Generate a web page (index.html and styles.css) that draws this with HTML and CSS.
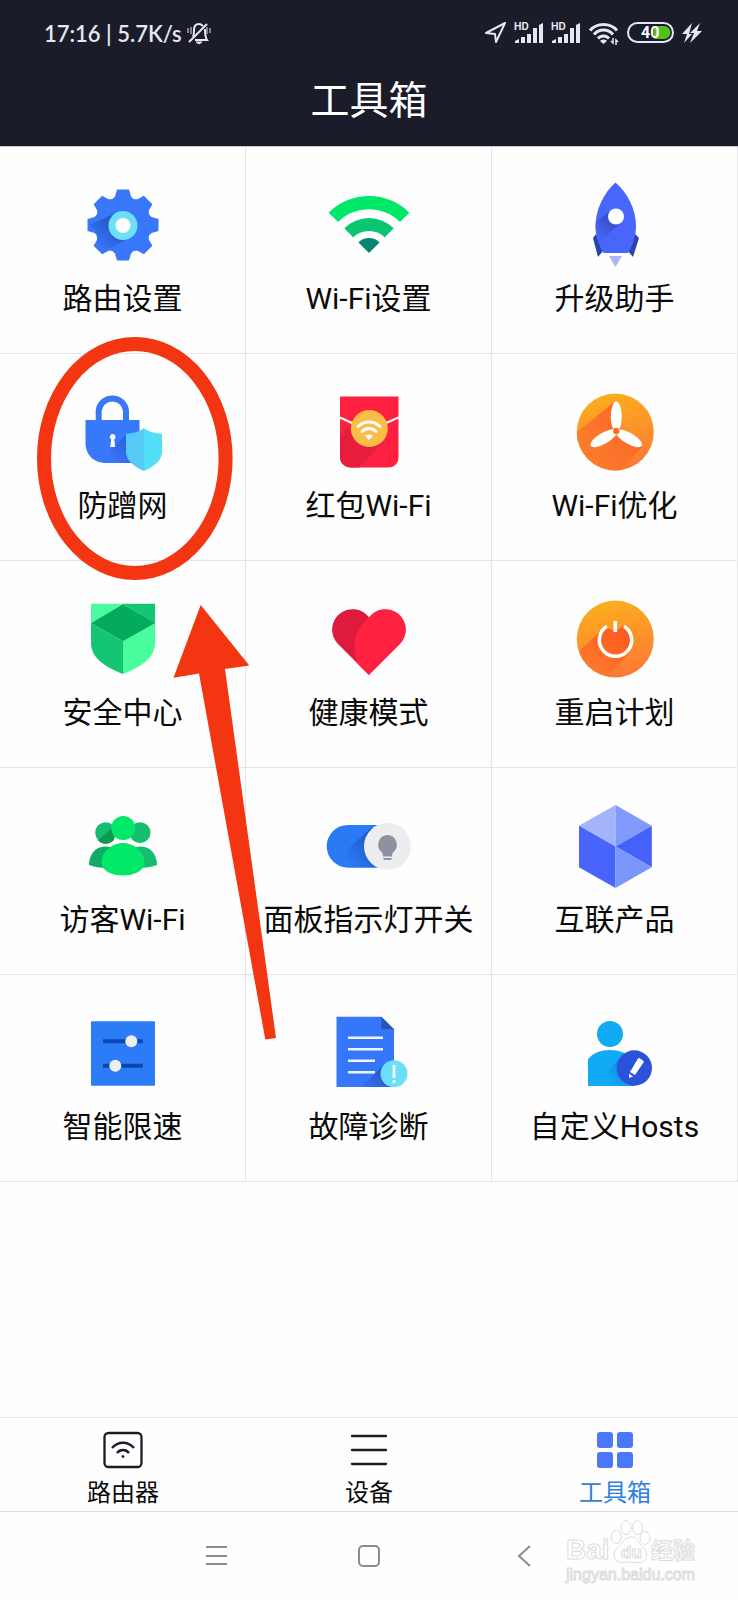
FILE: index.html
```html
<!DOCTYPE html>
<html lang="zh-CN">
<head>
    <meta charset="utf-8">
    <meta name="viewport" content="width=device-width, initial-scale=1">
    <title>工具箱</title>
    <link rel="stylesheet" href="styles.css">
</head>
<body>
    <header class="header">
        <div class="status">
            <div class="status-left">
                <span>17:16 | 5.7K/s</span>
                <svg width="24" height="24" viewBox="0 0 24 24" fill="none" stroke="#e6e7f0" stroke-width="2">
                    <path d="M6 16c1-2 1-4 1-7 0-4 2-6 5-6 2 0 3 1 4 2M18 8c0 4 0 8 2 11H8M2 21L20 3"/>
                    <path d="M9 21h6l-3 2z" fill="#e6e7f0" stroke-width="1"/>
                    <path d="M1 7v5M4 6v7M20 6v7M23 7v5" stroke-width="1"/>
                </svg>
            </div>
            <div class="status-right">
                <svg width="21" height="24" viewBox="0 0 21 24" fill="none" stroke="#e6e7f0" stroke-width="2" stroke-linejoin="round">
                    <path d="M20 2L1 12l9 1 1 8z"/>
                </svg>
                <svg width="29" height="24" viewBox="0 0 29 24" fill="#e6e7f0">
                    <text class="hd" x="0" y="9">HD</text>
                    <path d="M1 22v-2l4-2v4zM7 16h4v6H7zM13 13h4v9h-4zM19 7h4v15h-4zM25 4l4-2v20h-4z"/>
                </svg>
                <svg width="29" height="24" viewBox="0 0 29 24" fill="#e6e7f0">
                    <text class="hd" x="0" y="9">HD</text>
                    <path d="M1 22v-2l4-2v4zM7 16h4v6H7zM13 13h4v9h-4zM19 7h4v15h-4zM25 4l4-2v20h-4z"/>
                </svg>
                <svg width="31" height="24" viewBox="0 0 31 24" fill="none" stroke="#e6e7f0" stroke-width="3">
                    <path d="M2 9.500C9 1.500 22 1.500 29 9.500M6 13.500c5-6 14-6 19 0M10 17.500c3-3.500 8-3.500 11 0"/>
                    <path d="M12 20c2-2 5-2 7 0l-3.500 3z" fill="#e6e7f0" stroke="none"/>
                    <path d="M25 17v5l-2-2M28 24v-5l2 2" stroke-width="1.500"/>
                </svg>
                <svg width="47" height="24" viewBox="0 0 47 24">
                    <rect x="1" y="2" width="45" height="19" rx="9.500" fill="none" stroke="#e6e7f0" stroke-width="2"/>
                    <path d="M27 5h10a6.500 6.500 0 0 1 0 13H27z" fill="#54c01c"/>
                    <text class="charge" x="14" y="17">40</text>
                </svg>
                <svg width="21" height="24" viewBox="0 0 21 24" fill="#e6e7f0">
                    <path d="M10 2L0 13h5L2 22l8-9H7zM18 2L8 12h4L8 22 20 10h-5z"/>
                </svg>
            </div>
        </div>
        <h1 class="title">工具箱</h1>
    </header>

    <main class="tools">
        <a class="tool" href="#">
            <svg class="tool-icon" viewBox="0 0 90 90">
                <defs>
                    <path id="tooth" d="M39 9.500h12l2 7 5 5H32l5-5z"/>
                    <linearGradient id="gearShade" x1="1" y1="0" x2="0" y2="1">
                        <stop offset="0.300" stop-color="#2456c4"/>
                        <stop offset="0.850" stop-color="#3877fa"/>
                    </linearGradient>
                </defs>
                <g fill="#3877fa">
                    <circle cx="45" cy="45" r="28"/>
                    <use href="#tooth"/>
                    <use href="#tooth" transform="rotate(45 45 45)"/>
                    <use href="#tooth" transform="rotate(90 45 45)"/>
                    <use href="#tooth" transform="rotate(135 45 45)"/>
                    <use href="#tooth" transform="rotate(180 45 45)"/>
                    <use href="#tooth" transform="rotate(225 45 45)"/>
                    <use href="#tooth" transform="rotate(270 45 45)"/>
                    <use href="#tooth" transform="rotate(315 45 45)"/>
                </g>
                <path d="M36 34L11 45l7 6 2 14 8 6 26-15z" fill="url(#gearShade)"/>
                <circle cx="45" cy="45.500" r="14.500" fill="#6ddff9"/>
                <circle cx="45" cy="45.500" r="7.500" fill="#fff"/>
            </svg>
            <span class="tool-name">路由设置</span>
        </a>
        <a class="tool" href="#">
            <svg class="tool-icon" viewBox="0 0 90 90">
                <path d="M4.700 32.700A57 57 0 0 1 85.300 32.700L76 42A43.800 43.800 0 0 0 14 42Z" fill="#00e86a"/>
                <path d="M20.300 48.300A35 35 0 0 1 69.700 48.300L60.600 57.400A22 22 0 0 0 29.400 57.400Z" fill="#0ac671"/>
                <path d="M34.400 62.400A15 15 0 0 1 55.600 62.400L45 73Z" fill="#098574"/>
            </svg>
            <span class="tool-name">Wi-Fi设置</span>
        </a>
        <a class="tool" href="#">
            <svg class="tool-icon" viewBox="0 0 90 90">
                <defs>
                    <linearGradient id="rocketShade" x1="1" y1="0" x2="0.200" y2="1">
                        <stop offset="0.300" stop-color="#364bc0"/>
                        <stop offset="1" stop-color="#4966fa"/>
                    </linearGradient>
                </defs>
                <path d="M26 54l-3 4 5 19 5-6zM65 54l4 4-6 19-5-6z" fill="#2743ae"/>
                <path d="M45.500 2.500C58 13 66 30 66 46c0 10-3 19-8 27H33.500c-5-8-8-17-8-27 0-16 8-33 20-43.500z" fill="#4966fa"/>
                <path d="M40 31L26 42c-1 8 1 12 4 19l22-19z" fill="url(#rocketShade)"/>
                <circle cx="46" cy="36.500" r="8" fill="#fff"/>
                <path d="M39 76h13l-6.500 11z" fill="#abb5f6"/>
            </svg>
            <span class="tool-name">升级助手</span>
        </a>

        <a class="tool" href="#">
            <svg class="tool-icon" viewBox="0 0 90 90">
                <defs>
                    <linearGradient id="lockShade" x1="1" y1="0" x2="0" y2="1">
                        <stop offset="0.200" stop-color="#2a5fd8"/>
                        <stop offset="0.900" stop-color="#3878fb"/>
                    </linearGradient>
                </defs>
                <path d="M20.700 35V24A13.700 13.700 0 0 1 48 24V35" fill="none" stroke="#3878f2" stroke-width="6"/>
                <path d="M7.500 33h54v43H28C15 76 7.500 67 7.500 56z" fill="#3878fb"/>
                <path d="M49 47L34 61l-7 14.800 1 .2h28l5.500-29z" fill="url(#lockShade)"/>
                <path d="M34.700 47a3 3 0 0 1 1.500 5.500l1 7.500h-5l1-7.500a3 3 0 0 1 1.500-5.500z" fill="#fff"/>
                <path d="M66 41.300c-5 4-11 5-18 5.500v19C49 75 57 80 66 84z" fill="#56c9f5"/>
                <path d="M66 41.300c5 4 11 5 18 5.500v19C83 75 75 80 66 84z" fill="#52dff7"/>
            </svg>
            <span class="tool-name">防蹭网</span>
        </a>
        <a class="tool" href="#">
            <svg class="tool-icon" viewBox="0 0 90 90">
                <path d="M16 9.500h58.500V70c0 6-4 10.500-10 10.500H27c-6 0-11-4.500-11-10.500z" fill="#fd203f"/>
                <path d="M28 37L16 49v21c0 6 5 10.500 11 10.500h8L59 55z" fill="#e81c3c"/>
                <path d="M16 30.500l13 6M62 36l12.500-5.500" stroke="#fff" stroke-width="2"/>
                <circle cx="45.300" cy="41.500" r="18.500" fill="#fcbd47"/>
                <g fill="none" stroke="#fff" stroke-width="3" stroke-linecap="round">
                    <path d="M34 39.500c6-6 16-6 22 0M38 44.500c4-4 10-4 14 0"/>
                </g>
                <path d="M41 49c2-2 6-2 8 0l-4 4z" fill="#fff"/>
            </svg>
            <span class="tool-name">红包Wi-Fi</span>
        </a>
        <a class="tool" href="#">
            <svg class="tool-icon" viewBox="0 0 90 90">
                <defs>
                    <linearGradient id="orange" x1="0.400" y1="0" x2="0.600" y2="1">
                        <stop offset="0" stop-color="#fcae1e"/>
                        <stop offset="1" stop-color="#fd7735"/>
                    </linearGradient>
                    <linearGradient id="orangeShade" x1="1" y1="0" x2="0" y2="0.600">
                        <stop offset="0" stop-color="#fd6128"/>
                        <stop offset="1" stop-color="#fb802c"/>
                    </linearGradient>
                    <clipPath id="disc"><circle cx="45.300" cy="45" r="38.500"/></clipPath>
                    <ellipse id="blade" cx="46.300" cy="29.500" rx="5.500" ry="15"/>
                </defs>
                <circle cx="45.300" cy="45" r="38.500" fill="url(#orange)"/>
                <path d="M44 15L0 51v39h44l28-30-22-20z" fill="url(#orangeShade)" clip-path="url(#disc)"/>
                <g fill="#fff">
                    <use href="#blade"/>
                    <use href="#blade" transform="rotate(120 46.300 44)"/>
                    <use href="#blade" transform="rotate(240 46.300 44)"/>
                </g>
                <circle cx="46.300" cy="44" r="3.200" fill="#fd6d2c"/>
            </svg>
            <span class="tool-name">Wi-Fi优化</span>
        </a>

        <a class="tool" href="#">
            <svg class="tool-icon" viewBox="0 0 90 90">
                <path d="M13 9.700h32L13 29.500z" fill="#49fb9d"/>
                <path d="M45 9.700h32v20z" fill="#14c674"/>
                <path d="M13 29.300l32 18V80C27 73 13 64 13 49z" fill="#14c674"/>
                <path d="M77 29.300l-32 18V80c18-7 32-16 32-31z" fill="#49fd9e"/>
                <path d="M45 10l32 19.300-32 18-32-18z" fill="#03ab5b"/>
            </svg>
            <span class="tool-name">安全中心</span>
        </a>
        <a class="tool" href="#">
            <svg class="tool-icon" viewBox="0 0 90 90">
                <path d="M14 50A20.500 20.500 0 1 1 45 23.300L60 60 45 81z" fill="#dd1b3c"/>
                <path d="M45 23.300A20.500 20.500 0 1 1 76 50L45 81 34 70C28 52 29 38 45 23.300z" fill="#fe2240"/>
            </svg>
            <span class="tool-name">健康模式</span>
        </a>
        <a class="tool" href="#">
            <svg class="tool-icon" viewBox="0 0 90 90">
                <defs>
                    <linearGradient id="powerShade" x1="1" y1="0" x2="0.200" y2="1">
                        <stop offset="0.200" stop-color="#fd5d20"/>
                        <stop offset="1" stop-color="#fc8530"/>
                    </linearGradient>
                </defs>
                <circle cx="45.300" cy="45" r="38.500" fill="url(#orange)"/>
                <path d="M35 33L0 66v24h30l29-31 2-15-7-12-9 5z" fill="url(#powerShade)" clip-path="url(#disc)"/>
                <path d="M37 32.300a16.200 16.200 0 1 0 17 0" fill="none" stroke="#fff" stroke-width="3.600"/>
                <path d="M45.300 27v11" stroke="#fff" stroke-width="3.600"/>
            </svg>
            <span class="tool-name">重启计划</span>
        </a>

        <a class="tool" href="#">
            <svg class="tool-icon" viewBox="0 0 90 90">
                <circle cx="27.700" cy="31.700" r="10.500" fill="#14bd6f"/>
                <path d="M20 39.500L36 25v14a10.500 10.500 0 0 1-16 .500z" fill="#079a50"/>
                <circle cx="62" cy="31.700" r="10.500" fill="#14bd6f"/>
                <path d="M11 64c0-10 6-18.500 16-18.500 4 0 8 1 11 4L30 67c-8 0-14-1-19-3z" fill="#10ac65"/>
                <path d="M79 64c0-10-6-18.500-16-18.500-4 0-8 1-11 4L60 67c8 0 14-1 19-3z" fill="#14bd6f"/>
                <circle cx="45.300" cy="27" r="12" fill="#02e868"/>
                <path d="M45 42c12 0 21.500 10 21.500 19S56 74.500 45 74.500 23.500 70 23.500 61 33 42 45 42z" fill="#02e868"/>
            </svg>
            <span class="tool-name">访客Wi-Fi</span>
        </a>
        <a class="tool" href="#">
            <svg class="tool-icon" viewBox="0 0 90 90">
                <defs>
                    <linearGradient id="toggleShade" x1="1" y1="0" x2="0" y2="0.700">
                        <stop offset="0.200" stop-color="#1c56c4"/>
                        <stop offset="0.900" stop-color="#2b7af5"/>
                    </linearGradient>
                </defs>
                <rect x="2.700" y="24" width="70" height="42.500" rx="21.200" fill="#2b7af5"/>
                <path d="M47 27L12 59c3 4 7 7.500 12 7.500h33z" fill="url(#toggleShade)"/>
                <circle cx="63.500" cy="45.300" r="23.500" fill="#ebedf0"/>
                <path d="M63.500 34a9.700 9.700 0 0 1 6 17c-1 1-1.500 2-1.500 4.500h-9c0-2.500-.5-3.500-1.500-4.500a9.700 9.700 0 0 1 6-17z" fill="#8e929f"/>
                <path d="M59 57h9l-1 2h-7z" fill="#8e929f"/>
            </svg>
            <span class="tool-name">面板指示灯开关</span>
        </a>
        <a class="tool" href="#">
            <svg class="tool-icon" viewBox="0 0 90 90">
                <path d="M45.500 4v41.500L9 24.700z" fill="#a4b3fd"/>
                <path d="M45.500 4l36.300 20.700-36.300 20.800z" fill="#809bfb"/>
                <path d="M81.800 24.700v41.600L45.500 45.500z" fill="#4561fa"/>
                <path d="M9 24.700l36.500 20.800V87L9 66.300z" fill="#4963fd"/>
                <path d="M45.500 45.500l36.300 20.800L45.500 87z" fill="#7997fa"/>
            </svg>
            <span class="tool-name">互联产品</span>
        </a>

        <a class="tool" href="#">
            <svg class="tool-icon" viewBox="0 0 90 90">
                <rect x="13" y="13.300" width="64" height="64.500" rx="1" fill="#2c7cf8"/>
                <path d="M25 33.300h39.700M25 57.700h39.700" stroke="#0947b0" stroke-width="4"/>
                <circle cx="53.300" cy="33.300" r="6" fill="#efefef"/>
                <circle cx="37.300" cy="57.700" r="6" fill="#efefef"/>
            </svg>
            <span class="tool-name">智能限速</span>
        </a>
        <a class="tool" href="#">
            <svg class="tool-icon" viewBox="0 0 90 90">
                <defs>
                    <linearGradient id="docShade" x1="1" y1="0" x2="0" y2="1">
                        <stop offset="0.200" stop-color="#2550b4"/>
                        <stop offset="1" stop-color="#3674f4"/>
                    </linearGradient>
                </defs>
                <path d="M12.500 8.700h45L70 21.300V79H12.500z" fill="#3676fa"/>
                <path d="M62 55L37 79h33V60z" fill="url(#docShade)"/>
                <path d="M57.300 8.700L70 21.300H57.300z" fill="#2856b4"/>
                <path d="M24 29.700h35M24 41.300h35M24 52.700h27M24 64.300h27" stroke="#eef6ff" stroke-width="2.500"/>
                <circle cx="70" cy="65.700" r="13.500" fill="#6adff9"/>
                <path d="M70 57v13M70 72v3" stroke="#fff" stroke-width="2.700"/>
            </svg>
            <span class="tool-name">故障诊断</span>
        </a>
        <a class="tool" href="#">
            <svg class="tool-icon" viewBox="0 0 90 90">
                <defs>
                    <linearGradient id="personShade" x1="1" y1="0" x2="0" y2="0.800">
                        <stop offset="0.200" stop-color="#0c82dc"/>
                        <stop offset="0.800" stop-color="#10aaf5"/>
                    </linearGradient>
                </defs>
                <circle cx="40" cy="26" r="13" fill="#10aaf5"/>
                <path d="M18 78V51c5-6 13-9 22-9s17 3 22 9l2 27z" fill="#10aaf5"/>
                <path d="M52 47L26 78h38V60z" fill="url(#personShade)"/>
                <circle cx="64.300" cy="60" r="17.700" fill="#2b52db"/>
                <path d="M68 50.500q1-1 2 0l3 2q1 1 .5 2L65 67l-5-3zM59 65.500l4 3-4 1.500z" fill="#fff"/>
            </svg>
            <span class="tool-name">自定义Hosts</span>
        </a>

        <svg class="marker" viewBox="37 336 240 704">
            <ellipse cx="134.800" cy="458.500" rx="90.800" ry="114.500" fill="none" stroke="#f43511" stroke-width="14"/>
            <path d="M200.700 605L249.300 665.500 225 669 276 1038 265.300 1039.500 199 673.500 173.500 677.700Z" fill="#f43511"/>
        </svg>
    </main>

    <nav class="tabs">
        <a class="tab" href="#">
            <svg width="40" height="38" viewBox="0 0 40 38" fill="none" stroke="#1b1c25" stroke-width="2.300">
                <rect x="1.500" y="2" width="37" height="34" rx="4"/>
                <path d="M9 17c6-7 16-7 22 0M14 22c3-4 9-4 12 0"/>
                <circle cx="20" cy="25.500" r="1" fill="#1b1c25" stroke-width="1"/>
            </svg>
            <span>路由器</span>
        </a>
        <a class="tab" href="#">
            <svg width="40" height="38" viewBox="0 0 40 38" stroke="#1b1c25" stroke-width="2.300" stroke-linecap="round">
                <path d="M3 5h34M3 19h34M3 33h34"/>
            </svg>
            <span>设备</span>
        </a>
        <a class="tab tab-active" href="#">
            <svg width="40" height="38" viewBox="0 0 40 38" fill="#4a78f8">
                <rect x="2" y="1" width="16" height="16" rx="3"/>
                <rect x="22" y="1" width="16" height="16" rx="3"/>
                <rect x="2" y="21" width="16" height="16" rx="3"/>
                <rect x="22" y="21" width="16" height="16" rx="3"/>
            </svg>
            <span>工具箱</span>
        </a>
    </nav>

    <footer class="system">
        <button class="key" type="button" aria-label="菜单">
            <svg width="24" height="24" viewBox="0 0 24 24" stroke="#8c8c8c" stroke-width="2">
                <path d="M1 3h21M1 12h21M1 20h21"/>
            </svg>
        </button>
        <button class="key" type="button" aria-label="主页">
            <svg width="24" height="24" viewBox="0 0 24 24" fill="none" stroke="#8c8c8c" stroke-width="2">
                <rect x="2" y="2" width="20" height="20" rx="4"/>
            </svg>
        </button>
        <button class="key" type="button" aria-label="返回">
            <svg width="24" height="24" viewBox="0 0 24 24" fill="none" stroke="#8c8c8c" stroke-width="2">
                <path d="M21 2L10 12l11 10"/>
            </svg>
        </button>

        <svg class="watermark" width="140" height="70" viewBox="0 0 140 70">
            <text class="wm-big" x="4" y="43">Bai</text>
            <ellipse cx="54.300" cy="21" rx="5" ry="6.500"/>
            <ellipse cx="64" cy="11.700" rx="5" ry="7"/>
            <ellipse cx="75.500" cy="11.700" rx="5" ry="7"/>
            <ellipse cx="83" cy="22" rx="5" ry="6.500"/>
            <path d="M69.500 21c6 0 7 6 11 10 6 5 6 15-3 15.500-4 0-12-1-17 0-9 0-11-9-5-15 5-4 7-10.500 14-10.500z"/>
            <text class="wm-du" x="59" y="42">du</text>
            <text class="wm-cjk" x="89" y="42">经验</text>
            <text class="wm-url" x="4" y="64">jingyan.baidu.com</text>
        </svg>
    </footer>
</body>
</html>
```
FILE: styles.css
```css
* {
    box-sizing: border-box;
}

body {
    display: flex;
    flex-direction: column;
    min-height: 100vh;
    margin: 0;
    background-color: #fefefe;
    color: #0a0a0a;
    font-family: Roboto, "Noto Sans CJK SC", sans-serif;
}

a {
    color: inherit;
    text-decoration: none;
}

svg {
    display: block;
}

/* dark top: phone status + page title */
.header {
    background-color: #1b1c2a;
    border-bottom: 1px solid #c8c8ce;
    color: white;
}

.status {
    display: flex;
    justify-content: space-between;
    align-items: center;
    height: 66px;
    padding: 0 35px 0 44px;
    color: #e6e7f0;
    font-family: Lato, sans-serif;
    font-size: 22px;
    font-weight: 600;
}

.status-left {
    display: flex;
    align-items: center;
    gap: 5px;
}

.status-right {
    display: flex;
    align-items: center;
    gap: 8px;
}

.hd {
    font: bold 10px Inter, sans-serif;
}

.charge {
    fill: white;
    font: bold 16px Roboto, sans-serif;
}

.title {
    margin: 0;
    padding: 9px 0 19px;
    font-size: 39px;
    font-weight: 400;
    line-height: 52px;
    text-align: center;
}

/* tool grid */
.tools {
    position: relative;
    display: grid;
    grid-template-columns: repeat(3, 1fr);
    flex: 1;
    align-content: start;
}

.tool {
    display: flex;
    flex-direction: column;
    align-items: center;
    gap: 11px;
    height: 207px;
    padding-top: 33px;
    border-right: 1px solid #e4e4e6;
    border-bottom: 1px solid #e4e4e6;
}

.tool-icon {
    width: 90px;
    height: 90px;
}

.tool-name {
    font-size: 30px;
    line-height: 36px;
    white-space: nowrap;
}

.marker {
    position: absolute;
    top: 189px;
    left: 37px;
    width: 240px;
    height: 704px;
    pointer-events: none;
}

/* bottom tabs */
.tabs {
    display: grid;
    grid-template-columns: repeat(3, 1fr);
    padding: 13px 0 3px;
    border-top: 1px solid #e6e6e6;
}

.tab {
    display: flex;
    flex-direction: column;
    align-items: center;
    gap: 9px;
    font-size: 24px;
    line-height: 30px;
}

.tab-active {
    color: #2f7fdb;
}

/* android keys */
.system {
    position: relative;
    display: flex;
    justify-content: center;
    align-items: center;
    gap: 96px;
    height: 89px;
    border-top: 1px solid #dedede;
}

.key {
    display: flex;
    justify-content: center;
    align-items: center;
    width: 56px;
    height: 56px;
    padding: 0;
    border: 0;
    background: none;
}

.watermark {
    position: absolute;
    top: 4px;
    right: 36px;
    fill: white;
    stroke: #dcdcdc;
    stroke-width: 1px;
}

.wm-big {
    font: bold 28px "Liberation Sans", sans-serif;
}

.wm-du {
    font: bold 17px "Liberation Sans", sans-serif;
}

.wm-cjk {
    font: bold 22px "Noto Sans CJK SC", sans-serif;
}

.wm-url {
    font: 16px "Liberation Sans", sans-serif;
}
```
